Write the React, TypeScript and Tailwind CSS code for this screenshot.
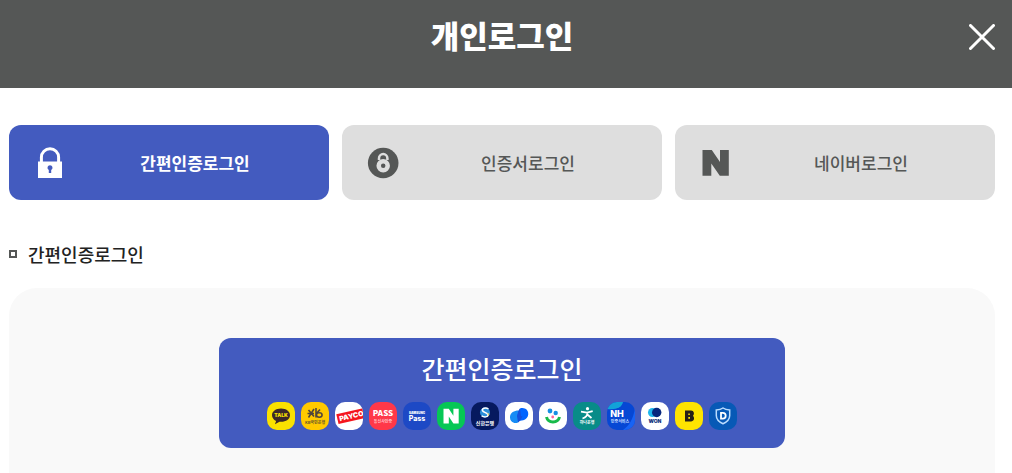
import type { ReactNode } from 'react';
import clsx from 'clsx';

const KR = "font-['Noto_Sans_CJK_KR',sans-serif]";
const LATIN = 'Inter, sans-serif';

function LockIcon() {
  return (
    <svg viewBox="0 0 32 32" className="w-8 h-8 shrink-0" aria-hidden="true">
      <path d="M7.400 15v-4.700a8.600 8.600 0 0 1 17.200 0V15" fill="none" stroke="#fff" strokeWidth="3" />
      <path d="M4 14.500h24V31H4z" fill="#fff" />
      <path d="M16 18.200a2.500 2.500 0 0 0-1.200 4.700V26h2.400v-3.100a2.500 2.500 0 0 0-1.200-4.700z" fill="#435bbf" />
    </svg>
  );
}

function CertIcon() {
  return (
    <svg viewBox="0 0 32 32" className="w-8 h-8 shrink-0" aria-hidden="true">
      <circle cx="16.200" cy="16" r="15.300" fill="#555756" />
      <path d="M12 13v-1.700a4.200 4.200 0 0 1 8.400 0V13" fill="none" stroke="#dedede" strokeWidth="2.500" />
      <circle cx="16.200" cy="18.700" r="4.500" fill="none" stroke="#dedede" strokeWidth="4.500" />
    </svg>
  );
}

function NaverIcon() {
  return (
    <svg viewBox="0 0 32 32" className="w-8 h-8 shrink-0" aria-hidden="true">
      <path d="M2.500 3h9.300l8.200 12V3h8.800v25.800h-9L11.300 16.500v12.300H2.500z" fill="#555756" />
    </svg>
  );
}

const tabs: { label: string; icon: ReactNode; active?: boolean }[] = [
  { label: '간편인증로그인', icon: <LockIcon />, active: true },
  { label: '인증서로그인', icon: <CertIcon /> },
  { label: '네이버로그인', icon: <NaverIcon /> },
];

const providers: { name: string; bg: string; art: ReactNode }[] = [
  {
    name: 'kakao',
    bg: '#fae100',
    art: (
      <>
        <path d="M14 6.500c-5.200 0-9 2.900-9 6.700 0 2.500 1.600 4.500 4.100 5.700l-1.200 3.400 4.600-2.600 1.500.1c5.200 0 9-2.800 9-6.600s-3.800-6.700-9-6.700z" fill="#3c2929" />
        <text x="14" y="15" fontSize="5" fontWeight="900" fontFamily={LATIN} textAnchor="middle" fill="#fae100">TALK</text>
      </>
    ),
  },
  {
    name: 'kb',
    bg: '#ffc900',
    art: (
      <>
        <path d="M7.500 8l5.500 6.500M13 7l-5.500 8.500M6.500 11.500h6.500M15 6v9.500M15 12l4-4.500" fill="none" stroke="#51463b" strokeWidth="1.600" />
        <ellipse cx="18.300" cy="13" rx="2.800" ry="2.200" fill="none" stroke="#51463b" strokeWidth="1.500" />
        <text x="14" y="22" fontSize="4" fontWeight="700" textAnchor="middle" fill="#6b5829">KB국민은행</text>
      </>
    ),
  },
  {
    name: 'payco',
    bg: '#ffffff',
    art: (
      <g transform="rotate(-13 14 14)">
        <path d="M2 9.500h30v10H2z" fill="#f5161d" />
        <text x="4" y="17" fontSize="7" fontWeight="900" fontFamily={LATIN} fill="#fff">PAYCO</text>
      </g>
    ),
  },
  {
    name: 'pass',
    bg: '#ff3849',
    art: (
      <>
        <text x="14" y="14" fontSize="8" fontWeight="900" textAnchor="middle" fill="#fff">PASS</text>
        <text x="14" y="21" fontSize="4" fontWeight="700" textAnchor="middle" fill="#ffc3c8">통신사인증</text>
      </>
    ),
  },
  {
    name: 'samsung',
    bg: '#1d49c5',
    art: (
      <>
        <text x="14" y="11.500" fontSize="3" fontWeight="900" fontFamily={LATIN} textAnchor="middle" fill="#fff">SAMSUNG</text>
        <text x="14" y="19" fontSize="7" fontWeight="800" fontFamily={LATIN} textAnchor="middle" fill="#fff">Pass</text>
      </>
    ),
  },
  {
    name: 'naver',
    bg: '#06c755',
    art: <path d="M6.500 6.800h5.300l4.600 6.900V6.800h5.300v14.700h-5.300l-4.600-6.900v6.900H6.500z" fill="#fff" />,
  },
  {
    name: 'shinhan',
    bg: '#06195f',
    art: (
      <>
        <circle cx="14" cy="10.500" r="5" fill="#2c8fd8" />
        <path d="M17.500 7c-3-2-7-.4-6 1.600s6 2.500 5.500 4.700-4.500 1.800-6.300.6" fill="none" stroke="#fff" strokeWidth="1.500" />
        <path d="M16.500 10.500l2 1.500-1.500 2.500z" fill="#d8c777" />
        <text x="14" y="22.500" fontSize="5" fontWeight="700" textAnchor="middle" fill="#fff">신한은행</text>
      </>
    ),
  },
  {
    name: 'toss',
    bg: '#ffffff',
    art: (
      <>
        <path d="M13 20.500c-4.400 1.800-8.300-1.500-8-5.800.3-4 4-6.200 8.500-6.200l4 6z" fill="#168cf5" />
        <path d="M15 6.500c4.800-1.500 8.500 1.600 8.200 6-.3 3.700-3.600 6-8.200 6.200l-3-4.700z" fill="#0064ff" />
        <path d="M13.500 8.500L15 6.500l1 7.500 1.500.5-2.500 4.200-2 1.800-1-6.500z" fill="#1450dc" />
      </>
    ),
  },
  {
    name: 'kica',
    bg: '#ffffff',
    art: (
      <>
        <circle cx="11" cy="9" r="2.400" fill="#168fe4" />
        <circle cx="16.700" cy="11" r="2.200" fill="#168fe4" />
        <circle cx="13.700" cy="15" r="1.400" fill="#ff609a" />
        <path d="M7.500 15c1.500 6.500 11.500 6.500 13 0" fill="none" stroke="#18ba4a" strokeWidth="3" />
      </>
    ),
  },
  {
    name: 'hana',
    bg: '#088c88',
    art: (
      <>
        <circle cx="14.500" cy="6.700" r="1.600" fill="#fff" />
        <path d="M8 9.700l6 .9 5.700-1.400M14.500 10.500c0 3-2 5-5 6M14.300 12.500l4.200 3.500" fill="none" stroke="#fff" strokeWidth="1.800" />
        <text x="14" y="22" fontSize="4" fontWeight="700" textAnchor="middle" fill="#fff">하나은행</text>
      </>
    ),
  },
  {
    name: 'nh',
    bg: '#0647d4',
    art: (
      <>
        <path d="M0 0h16c-1 5-6 8-16 7z" fill="#12a3d8" />
        <path d="M28 6v22H16c7-5 10-11 12-22z" fill="#1763f5" />
        <text x="10" y="14.500" fontSize="9" fontWeight="800" fontFamily={LATIN} textAnchor="middle" fill="#fff">NH</text>
        <text x="13" y="21" fontSize="4" fontWeight="700" textAnchor="middle" fill="#c8ddff">인증서비스</text>
      </>
    ),
  },
  {
    name: 'woori',
    bg: '#ffffff',
    art: (
      <>
        <circle cx="11.500" cy="10.500" r="4.500" fill="#20b7ed" />
        <circle cx="15.700" cy="10.500" r="4.700" fill="#07277e" />
        <text x="14" y="21" fontSize="5" fontWeight="900" fontFamily={LATIN} textAnchor="middle" fill="#17377f">WON</text>
      </>
    ),
  },
  {
    name: 'banksalad',
    bg: '#ffe400',
    art: (
      <path
        d="M10 8.500h6c3 0 3.700 3.300 2 5.300 2 2.200 1 5.700-2 5.700h-6zM13.300 11.400v1.500h1.500v-1.500zm0 3.700v1.700h1.700v-1.700z"
        fill="#272019"
        fillRule="evenodd"
      />
    ),
  },
  {
    name: 'dream',
    bg: '#0759b6',
    art: (
      <>
        <path d="M14 6c2 1.400 4 1.800 6.700 1.900v5.600c0 4.300-3.200 6.700-6.700 8.300-3.500-1.600-6.700-4-6.700-8.300V7.900C10 7.800 12 7.400 14 6z" fill="none" stroke="#b9dcff" strokeWidth="1.500" />
        <path d="M12 10.800h1.800a2.900 2.900 0 0 1 0 5.800H12z" fill="none" stroke="#fff" strokeWidth="1.800" />
      </>
    ),
  },
];

function Header() {
  return (
    <header className="grid grid-cols-[1fr_auto_1fr] items-center h-[88px] pb-[14px] pl-[9px] pr-[17px] bg-[#555756] text-white">
      <h1 className="col-start-2 pb-1 text-[31px] leading-10 font-black">개인로그인</h1>
      <button type="button" aria-label="닫기" className="justify-self-end">
        <svg viewBox="0 0 26 26" className="w-[26px] h-[26px]">
          <path d="M1.500 1.500l23 23M24.500 1.500l-23 23" stroke="#fff" strokeWidth="3" strokeLinecap="round" />
        </svg>
      </button>
    </header>
  );
}

export default function App() {
  return (
    <div className={clsx('min-h-screen flex flex-col bg-white', KR)}>
      <Header />

      <main className="flex-1 flex flex-col pt-[37px] pl-[9px] pr-[17px]">
        <nav className="grid grid-cols-3 gap-[13px]">
          {tabs.map(tab => (
            <button
              key={tab.label}
              type="button"
              className={clsx(
                'flex items-center h-[75px] pl-[25px] pr-[5px] rounded-xl text-[17px]',
                tab.active ? 'bg-[#435bbf] text-white font-bold' : 'bg-[#dedede] text-[#555756] font-medium'
              )}
            >
              {tab.icon}
              <span className="flex-1 text-center">{tab.label}</span>
            </button>
          ))}
        </nav>

        <h2 className="flex items-center gap-[11px] mt-10 mb-5 text-lg font-medium text-[#222]">
          <span className="w-2 h-2 border-2 border-[#555756]" />
          간편인증로그인
        </h2>

        <section className="flex-1 flex flex-col items-center pt-[50px] pb-[25px] px-4 rounded-t-[28px] bg-[#f9f9f9]">
          <button
            type="button"
            className="flex flex-col items-center w-[566px] max-w-full h-[110px] pt-3 rounded-xl bg-[#435bbf] text-white"
          >
            <span className="text-[25px] leading-9 font-medium">간편인증로그인</span>
            <span className="flex gap-[6px] mt-4">
              {providers.map(p => (
                <svg key={p.name} viewBox="0 0 28 28" className="w-7 h-7 rounded-[10px]" aria-hidden="true">
                  <rect width="28" height="28" fill={p.bg} />
                  {p.art}
                </svg>
              ))}
            </span>
          </button>
        </section>
      </main>
    </div>
  );
}
